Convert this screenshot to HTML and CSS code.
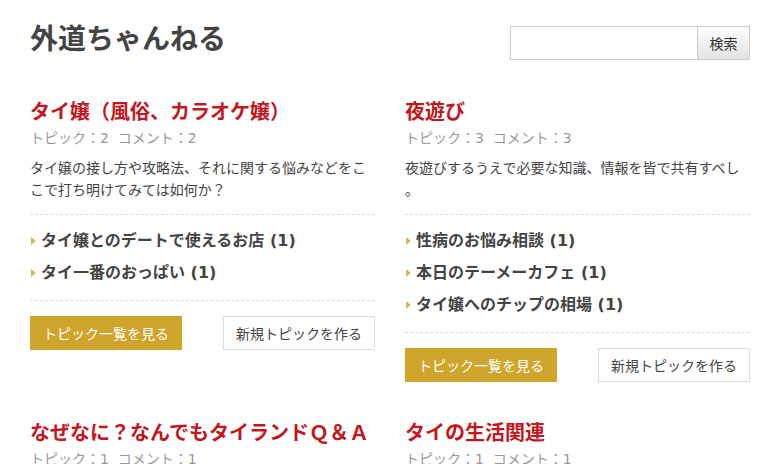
FILE: index.html
```html
<!DOCTYPE html>
<html lang="ja">
<head>
<meta charset="utf-8">
<title>外道ちゃんねる</title>
<link rel="stylesheet" href="styles.css">
</head>
<body>
<div class="page">
  <header class="header">
    <h1 class="site-title">外道ちゃんねる</h1>
    <form class="search">
      <input class="search-input" type="text">
      <button class="search-btn" type="button">検索</button>
    </form>
  </header>
  <main class="grid">
    <section class="card">
      <h2 class="card-title">タイ嬢（風俗、カラオケ嬢）</h2>
      <div class="meta">トピック：2&nbsp;&nbsp;コメント：2</div>
      <p class="desc">タイ嬢の接し方や攻略法、それに関する悩みなどをここで打ち明けてみては如何か？</p>
      <ul class="topics">
        <li>タイ嬢とのデートで使えるお店 (1)</li>
        <li>タイ一番のおっぱい (1)</li>
      </ul>
      <div class="actions">
        <a class="btn btn-gold">トピック一覧を見る</a>
        <a class="btn btn-outline">新規トピックを作る</a>
      </div>
    </section>
    <section class="card">
      <h2 class="card-title">夜遊び</h2>
      <div class="meta">トピック：3&nbsp;&nbsp;コメント：3</div>
      <p class="desc">夜遊びするうえで必要な知識、情報を皆で共有すべし<br>。</p>
      <ul class="topics">
        <li>性病のお悩み相談 (1)</li>
        <li>本日のテーメーカフェ (1)</li>
        <li>タイ嬢へのチップの相場 (1)</li>
      </ul>
      <div class="actions">
        <a class="btn btn-gold">トピック一覧を見る</a>
        <a class="btn btn-outline">新規トピックを作る</a>
      </div>
    </section>
    <section class="card">
      <h2 class="card-title">なぜなに？なんでもタイランドＱ＆Ａ</h2>
      <div class="meta">トピック：1&nbsp;&nbsp;コメント：1</div>
    </section>
    <section class="card">
      <h2 class="card-title">タイの生活関連</h2>
      <div class="meta">トピック：1&nbsp;&nbsp;コメント：1</div>
    </section>
  </main>
</div>
</body>
</html>
```
FILE: styles.css
```css
* { box-sizing: border-box; }
html, body { margin: 0; padding: 0; background: #fff; }
body {
  font-family: "DejaVu Sans", "Noto Sans CJK JP", sans-serif;
  color: #444;
  font-size: 14px;
}
.page {
  padding: 0 24px 0 30px;
}
.header {
  display: flex;
  justify-content: space-between;
  align-items: flex-start;
  padding-top: 23px;
}
.site-title {
  margin: 0;
  font-size: 28px;
  line-height: 34px;
  font-weight: bold;
  color: #444;
}
.search {
  display: flex;
  margin: 3px 0 0 0;
}
.search-input {
  width: 187px;
  height: 34px;
  border: 1px solid #ccc;
  border-right: none;
  margin: 0;
  padding: 0 6px;
  font: inherit;
  outline: none;
}
.search-btn {
  width: 53px;
  height: 34px;
  margin: 0;
  border: 1px solid #ccc;
  background: linear-gradient(#ffffff, #e2e2e2);
  font-family: "Noto Sans CJK JP", sans-serif;
  font-size: 14px;
  color: #333;
  padding: 0;
}
.grid {
  display: grid;
  grid-template-columns: 345px 345px;
  column-gap: 30px;
  row-gap: 36px;
  align-items: start;
  margin-top: 37px;
}
.card-title {
  margin: 0;
  font-size: 20px;
  line-height: 30px;
  font-weight: bold;
  color: #c4161c;
  white-space: nowrap;
}
.meta {
  font-size: 14px;
  line-height: 22px;
  color: #999;
}
.desc {
  margin: 8px 0 0 0;
  font-size: 14px;
  line-height: 22px;
  color: #444;
  line-break: anywhere;
  padding-bottom: 13px;
  border-bottom: 1px dashed #ddd;
}
.topics {
  list-style: none;
  margin: 0;
  padding: 10px 0 11px 0;
  border-bottom: 1px dashed #ddd;
}
.topics li {
  position: relative;
  padding-left: 11px;
  font-size: 16px;
  line-height: 32px;
  font-weight: bold;
  color: #444;
}
.topics li::before {
  content: "";
  position: absolute;
  left: 1px;
  top: 12px;
  border-left: 5px solid #dcb75a;
  border-top: 4px solid transparent;
  border-bottom: 4px solid transparent;
}
.actions {
  display: flex;
  justify-content: space-between;
  margin-top: 15px;
}
.btn {
  display: flex;
  align-items: center;
  justify-content: center;
  width: 152px;
  height: 34px;
  font-family: "Noto Sans CJK JP", sans-serif;
  font-size: 14px;
  text-decoration: none;
}
.btn-gold {
  background: #d0a52b;
  color: #fff;
}
.btn-outline {
  border: 1px solid #ddd;
  color: #444;
  background: #fff;
}
```
